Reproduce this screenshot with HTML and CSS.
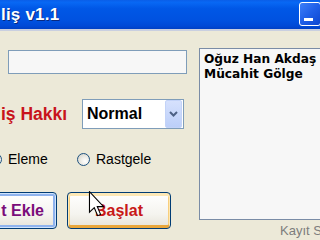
FILE: index.html
```html
<!DOCTYPE html>
<html>
<head>
<meta charset="utf-8">
<link rel="stylesheet" href="styles.css">
</head>
<body>
<div class="titlebar">
  <span class="title">liş v1.1</span>
  <span class="minbtn"><span class="minbar"></span></span>
</div>
<div class="content">
  <div class="left">
    <div class="textbox"></div>
    <div class="row-choice">
      <span class="label">iş Hakkı</span>
      <div class="select">
        <span class="sel-text">Normal</span>
        <span class="drop">
          <svg width="9" height="6" viewBox="0 0 9 6"><path d="M1 1 L4.5 4.5 L8 1" fill="none" stroke="#4d6185" stroke-width="2"/></svg>
        </span>
      </div>
    </div>
    <div class="radios">
      <label class="opt"><span class="radio"></span><span>Eleme</span></label>
      <label class="opt"><span class="radio"></span><span>Rastgele</span></label>
    </div>
    <div class="buttons">
      <button class="btn btn-add">t Ekle</button>
      <button class="btn btn-start">Başlat</button>
    </div>
  </div>
  <div class="right">
    <div class="listbox">
      <div class="item">Oğuz Han Akdaş</div>
      <div class="item">Mücahit Gölge</div>
    </div>
    <div class="status">Kayıt S</div>
  </div>
</div>
<svg class="cursor" width="18" height="26" viewBox="0 0 12 19">
  <path d="M0.5 0.5 L0.5 15.5 L4 12.2 L6.5 18 L8.6 17.1 L6.2 11.4 L10.8 11.4 Z" fill="#fff" stroke="#000" stroke-width="0.8" stroke-linejoin="miter"/>
</svg>
</body>
</html>
```
FILE: styles.css
```css
html, body {
  margin: 0;
  padding: 0;
}
body {
  width: 320px;
  height: 240px;
  overflow: hidden;
  background: #ece9d8;
  font-family: "Liberation Sans", Arial, sans-serif;
  position: relative;
}
.titlebar {
  height: 29px;
  display: flex;
  align-items: center;
  justify-content: space-between;
  background: linear-gradient(#0a5ee8 0%, #0868f4 8%, #0057e6 30%, #0052e0 70%, #0049d6 90%, #0040c4 100%);
  border-bottom: 2px solid #c9cfe0;
}
.title {
  color: #fff;
  font-weight: bold;
  font-size: 17px;
  padding-left: 1px;
  text-shadow: 1px 1px 0 #0a2a80;
  letter-spacing: 0.2px;
}
.minbtn {
  width: 22px;
  height: 24px;
  margin-right: -1px;
  margin-top: -2px;
  box-sizing: border-box;
  border: 1px solid #fff;
  border-radius: 3px;
  background: linear-gradient(135deg, #3d7ef8 0%, #1f5fe8 50%, #0c46d0 100%);
  display: flex;
  align-items: flex-end;
  padding: 0 0 4px 4px;
}
.minbar {
  display: block;
  width: 9px;
  height: 3px;
  background: #fff;
}
.content {
  display: flex;
  gap: 12px;
}
.left {
  width: 187px;
  flex: none;
  display: flex;
  flex-direction: column;
}
.textbox {
  margin-top: 19px;
  margin-left: 8px;
  height: 24px;
  box-sizing: border-box;
  border: 1px solid #7f9db9;
  background: #f7f7f7;
}
.row-choice {
  margin-top: 25px;
  display: grid;
  grid-template-columns: 82px 102px;
  align-items: center;
}
.label {
  color: #c8141c;
  font-weight: bold;
  font-size: 17.5px;
  padding-left: 1px;
}
.select {
  height: 30px;
  box-sizing: border-box;
  border: 1px solid #7f9db9;
  background: #fff;
  display: flex;
  align-items: center;
  justify-content: space-between;
  padding: 1px;
}
.sel-text {
  font-weight: bold;
  font-size: 16px;
  padding-left: 3px;
  color: #000;
}
.drop {
  width: 17px;
  height: 28px;
  box-sizing: border-box;
  border: 1px solid #c3d3f8;
  border-radius: 2px;
  background: linear-gradient(#d6e1fd, #bccff9);
  display: flex;
  align-items: center;
  justify-content: center;
}
.radios {
  margin-top: 22px;
  margin-left: -11px;
  height: 16px;
  display: grid;
  grid-template-columns: 88px auto;
  align-items: center;
  font-size: 14px;
  color: #000;
}
.opt {
  display: flex;
  align-items: center;
  gap: 6px;
}
.radio {
  width: 13px;
  height: 13px;
  box-sizing: border-box;
  border: 1px solid #1c5180;
  border-radius: 50%;
  background: radial-gradient(circle at 65% 65%, #ffffff 0%, #eeede8 40%, #cfccc0 100%);
}
.buttons {
  margin-top: 25px;
  display: flex;
  gap: 10px;
  margin-left: -47px;
}
.btn {
  width: 104px;
  height: 37px;
  box-sizing: border-box;
  border: 1px solid #003c74;
  border-radius: 4px;
  background: linear-gradient(#ffffff 0%, #f5f4ef 60%, #e6e3d8 100%);
  font-family: "Liberation Sans", Arial, sans-serif;
  font-weight: bold;
  font-size: 16px;
  padding: 0;
  display: flex;
  align-items: center;
}
.btn-add {
  color: #7a0c7a;
  justify-content: flex-end;
  padding-right: 12px;
  box-shadow: inset 0 0 0 1px #cee3fc, inset 0 0 0 3px #8fb3ee;
}
.btn-start {
  color: #c81818;
  justify-content: center;
  box-shadow: inset 0 2px 0 1px #fde8b6, inset 0 -3px 0 0 #e9a73c, inset 2px 0 0 #f8cf7e, inset -2px 0 0 #f8cf7e;
}
.right {
  flex: none;
  width: 140px;
  display: flex;
  flex-direction: column;
}
.listbox {
  margin-top: 17px;
  height: 172px;
  box-sizing: border-box;
  border: 1px solid #7a8ca6;
  background: #f7f7f7;
  padding: 3px 0 0 4px;
  font-family: "DejaVu Sans", Verdana, sans-serif;
  font-weight: bold;
  font-size: 12.2px;
  line-height: 15px;
  color: #000;
  white-space: nowrap;
}
.status {
  margin-top: 3px;
  margin-left: 81px;
  font-size: 13px;
  line-height: 16px;
  color: #7d7d7d;
  white-space: nowrap;
}
.cursor {
  position: absolute;
  left: 88px;
  top: 191px;
}
```
